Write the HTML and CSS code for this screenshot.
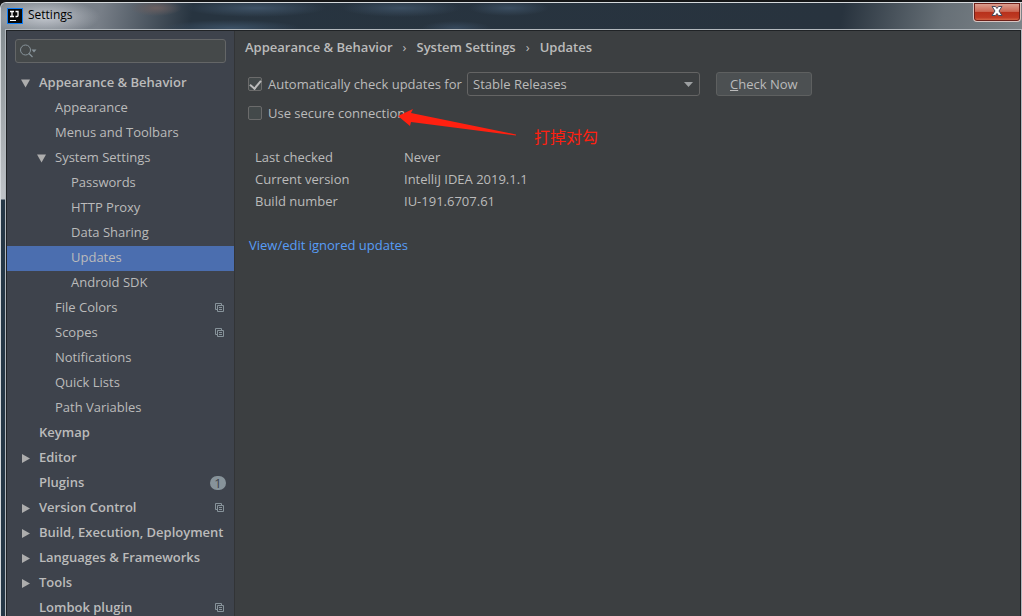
FILE: index.html
```html
<!DOCTYPE html>
<html lang="en">
<head>
<meta charset="utf-8">
<meta name="viewport" content="width=device-width, initial-scale=1">
<title>Settings</title>
<link rel="stylesheet" href="styles.css">
</head>
<body>
<svg class="defs" aria-hidden="true">
  <symbol id="copy" viewBox="0 0 9 9"><path d="M2.500 6.500H.5v-6h6v2M2.500 2.500h6v6h-6zM4 4.500h3M4 6.500h3" fill="none" stroke="#87939a"/></symbol>
  <symbol id="down" viewBox="0 0 9 9"><path d="M0 .5h9L4.500 8.500z" fill="#adadad"/></symbol>
  <symbol id="right" viewBox="0 0 9 9"><path d="M1 0l8 4.500L1 9z" fill="#adadad"/></symbol>
</svg>
<div class="window">
  <header class="titlebar">
    <svg class="logo" viewBox="0 0 16 16" aria-hidden="true"><path d="M0 0h16v16H0z" fill="#087cfa"/><path d="M1 1h14v14H1z" fill="#080808"/><path d="M3 3.500h4M5 3.500v5M3 8.500h4M8.500 3.500H11v4q0 1-1 1H8.500" fill="none" stroke="#fff" stroke-width="1.300"/><path d="M3 12h6v1H3z" fill="#fff"/></svg>
    <span class="title">Settings</span>
    <button class="close" type="button" aria-label="Close"><svg viewBox="0 0 12 10" width="12" height="10" aria-hidden="true"><path d="M1 .5h3.500L6 2.500 7.500.5H11L8 5l3 4.500H7.500L6 7.500 4.500 9.500H1L4 5z" fill="#fff" stroke="#454a5b"/></svg></button>
  </header>
  <div class="body">
    <aside class="sidebar">
      <label class="search">
        <svg viewBox="0 0 18 14" width="18" height="14" aria-hidden="true"><circle cx="5.500" cy="6" r="5" fill="none" stroke="#87939a"/><path d="M9 9.500L12.500 13" stroke="#87939a" stroke-width="1.300"/><path d="M11.500 5.500h5L14 8.500z" fill="#87939a"/></svg>
        <input type="text" aria-label="Search settings">
      </label>
      <nav class="tree">
        <a class="row group" href="#"><svg class="arrow"><use href="#down"/></svg><span class="name">Appearance &amp; Behavior</span></a>
        <a class="row level2" href="#"><span class="name">Appearance</span></a>
        <a class="row level2" href="#"><span class="name">Menus and Toolbars</span></a>
        <a class="row level2" href="#"><svg class="arrow"><use href="#down"/></svg><span class="name">System Settings</span></a>
        <a class="row level3" href="#"><span class="name">Passwords</span></a>
        <a class="row level3" href="#"><span class="name">HTTP Proxy</span></a>
        <a class="row level3" href="#"><span class="name">Data Sharing</span></a>
        <a class="row level3 selected" href="#" aria-current="page"><span class="name">Updates</span></a>
        <a class="row level3" href="#"><span class="name">Android SDK</span></a>
        <a class="row level2" href="#"><span class="name">File Colors</span><svg class="copy"><use href="#copy"/></svg></a>
        <a class="row level2" href="#"><span class="name">Scopes</span><svg class="copy"><use href="#copy"/></svg></a>
        <a class="row level2" href="#"><span class="name">Notifications</span></a>
        <a class="row level2" href="#"><span class="name">Quick Lists</span></a>
        <a class="row level2" href="#"><span class="name">Path Variables</span></a>
        <a class="row group" href="#"><span class="name">Keymap</span></a>
        <a class="row group" href="#"><svg class="arrow"><use href="#right"/></svg><span class="name">Editor</span></a>
        <a class="row group" href="#"><span class="name">Plugins</span><span class="count">1</span></a>
        <a class="row group" href="#"><svg class="arrow"><use href="#right"/></svg><span class="name">Version Control</span><svg class="copy"><use href="#copy"/></svg></a>
        <a class="row group" href="#"><svg class="arrow"><use href="#right"/></svg><span class="name">Build, Execution, Deployment</span></a>
        <a class="row group" href="#"><svg class="arrow"><use href="#right"/></svg><span class="name">Languages &amp; Frameworks</span></a>
        <a class="row group" href="#"><svg class="arrow"><use href="#right"/></svg><span class="name">Tools</span></a>
        <a class="row group" href="#"><span class="name">Lombok plugin</span><svg class="copy"><use href="#copy"/></svg></a>
      </nav>
    </aside>
    <main class="main">
      <div class="crumbs"><span>Appearance &amp; Behavior</span><i>›</i><span>System Settings</span><i>›</i><span>Updates</span></div>
      <div class="options">
        <div class="option">
          <label class="check auto"><input type="checkbox" checked><span>Automatically check updates for</span></label>
          <div class="select">
            <select aria-label="Update channel"><option>Stable Releases</option></select>
            <svg viewBox="0 0 9 5" width="9" height="5" aria-hidden="true"><path d="M0 0h9L4.500 5z" fill="#9da0a2"/></svg>
          </div>
          <button class="button" type="button"><u>C</u>heck Now</button>
        </div>
        <div class="option secure">
          <label class="check"><input type="checkbox"><span>Use secure connection</span></label>
          <div class="note">
            <svg viewBox="0 0 120 30" width="120" height="30" aria-hidden="true"><path d="M0 8L15 1l-2 4L118 26.500v1L13 14l-1 4z" fill="#ff2010"/></svg>
            <span lang="zh">打掉对勾</span>
          </div>
        </div>
      </div>
      <dl class="info">
        <dt>Last checked</dt><dd>Never</dd>
        <dt>Current version</dt><dd>IntelliJ IDEA 2019.1.1</dd>
        <dt>Build number</dt><dd>IU-191.6707.61</dd>
      </dl>
      <a class="link" href="#">View/edit ignored updates</a>
    </main>
  </div>
</div>
</body>
</html>
```
FILE: styles.css
```css
* { box-sizing: border-box; }
body {
  display: flex;
  flex-direction: column;
  height: 100vh;
  margin: 0;
  padding-top: 2px;
  background: #151617;
  color: #bbbbbb;
  font: 13px/18px "Open Sans", "Noto Sans CJK SC", sans-serif;
}
input, select, button { font: inherit; color: inherit; margin: 0; }
.defs { display: none; }
.window {
  display: flex;
  flex: 1;
  flex-direction: column;
  min-height: 0;
  overflow: hidden;
  padding: 0 1px 0 5px;
  border: solid #d5d9dc;
  border-width: 1px 0 0 1px;
  border-top-left-radius: 6px;
  background: linear-gradient(#7c8589, #bfc3c7 196px, #253746 197px, #253746);
}
.titlebar {
  display: flex;
  align-items: flex-start;
  flex: none;
  height: 27px;
  margin: 0 -1px 0 -5px;
  padding: 0 1px 0 6px;
  background:
    radial-gradient(ellipse 55px 18px at 44px 14px, #c3c7ce, transparent),
    radial-gradient(ellipse 26px 8px at 155px 5px, #6a5f60, transparent),
    radial-gradient(ellipse 70px 9px at 255px 5px, #3e5266, transparent),
    radial-gradient(ellipse 70px 8px at 230px 25px, #3b5065, transparent),
    radial-gradient(ellipse 60px 9px at 400px 5px, #3b4e61, transparent),
    radial-gradient(ellipse 40px 8px at 508px 5px, #3a4d60, transparent),
    radial-gradient(ellipse 35px 7px at 455px 25px, #36485b, transparent),
    linear-gradient(100deg, #858d94 0, #777e87 100px, #273440 190px, #28333e 830px, #677077 930px, #7c8388 100%);
}
.logo { width: 16px; height: 16px; margin: 5px 5px 0 0; }
.title { margin-top: 3px; color: #000; font-size: 12px; }
.close {
  display: flex;
  align-items: center;
  justify-content: center;
  width: 48px;
  height: 19px;
  margin-left: auto;
  padding: 0 0 2px;
  border: 1px solid #d9c4c1;
  border-top: 0;
  border-radius: 0 0 4px 4px;
  box-shadow: inset 0 0 0 1px #6e2019;
  background: linear-gradient(#dea596, #cb6753 47%, #b7301b 50%, #be3a23 80%, #dc7452);
}
.body {
  display: flex;
  flex: 1;
  min-height: 0;
  border: solid #202326;
  border-width: 1px 1px 0;
  box-shadow: 0 0 0 1px #b2b8bd;
  background: #3c3f41;
}
.sidebar {
  flex: none;
  width: 228px;
  padding-top: 8px;
  border-right: 1px solid #323436;
  background: #3e434c;
}
.search {
  display: flex;
  align-items: center;
  height: 24px;
  margin: 0 8px 8px;
  padding-left: 4px;
  border: 1px solid #646667;
  border-radius: 3px;
  background: #45494a;
}
.search input { flex: 1; min-width: 0; border: 0; background: none; outline: none; }
.row {
  display: flex;
  align-items: center;
  height: 25px;
  padding: 0 8px 0 32px;
  color: inherit;
  text-decoration: none;
  white-space: nowrap;
}
.name { padding-bottom: 3px; }
.group { font-weight: 600; }
.level2 { padding-left: 48px; }
.level3 { padding-left: 64px; }
.selected { background: #4b6eaf; }
.arrow { flex: none; width: 9px; height: 9px; margin: 0 9px 0 -18px; }
.copy { width: 9px; height: 9px; margin: 0 2px 2px auto; }
.count {
  width: 16px;
  height: 14px;
  margin: 0 0 2px auto;
  border-radius: 7px;
  background: #87939a;
  color: #3e434c;
  font-weight: 400;
  line-height: 14px;
  text-align: center;
}
.main { flex: 1; min-width: 0; padding: 7px 10px; }
.crumbs { display: flex; font-weight: 600; }
.crumbs i { width: 24px; font-style: normal; font-weight: 400; text-align: center; }
.options { padding: 15px 0 0 3px; }
.option { display: flex; align-items: center; height: 26px; }
.check { display: flex; align-items: center; gap: 6px; }
.auto { width: 219px; }
.check input {
  appearance: none;
  width: 14px;
  height: 14px;
  border: 1px solid #6b6b6b;
  border-radius: 2px;
  background: #43494a;
}
.check input:checked::after {
  content: "";
  display: block;
  width: 5px;
  height: 9px;
  margin: 0 0 0 3px;
  border: solid #bbb;
  border-width: 0 2px 2px 0;
  transform: rotate(40deg);
}
.select { display: flex; align-items: center; position: relative; width: 233px; }
.select select {
  appearance: none;
  width: 100%;
  height: 24px;
  padding: 0 20px 0 5px;
  border: 1px solid #646464;
  border-radius: 3px;
  background: #3c3f41;
}
.select svg { position: absolute; right: 7px; pointer-events: none; }
.button {
  height: 24px;
  margin-left: 16px;
  padding: 0 13px;
  border: 1px solid #5e6060;
  border-radius: 3px;
  background: #4c5052;
}
.secure { position: relative; height: 32px; }
.note {
  display: flex;
  position: absolute;
  left: 150px;
  top: 11px;
  gap: 16px;
  color: #ff2010;
  font-family: "Noto Sans CJK SC", sans-serif;
  font-weight: 400;
  font-size: 16px;
  line-height: 24px;
}
.note span { padding-top: 16px; }
.info {
  display: grid;
  grid-template-columns: 149px 1fr;
  margin: 17px 10px 24px;
  line-height: 22px;
}
.info dd { margin: 0; }
.link { display: inline-block; margin-left: 4px; color: #589df6; text-decoration: none; }
```
